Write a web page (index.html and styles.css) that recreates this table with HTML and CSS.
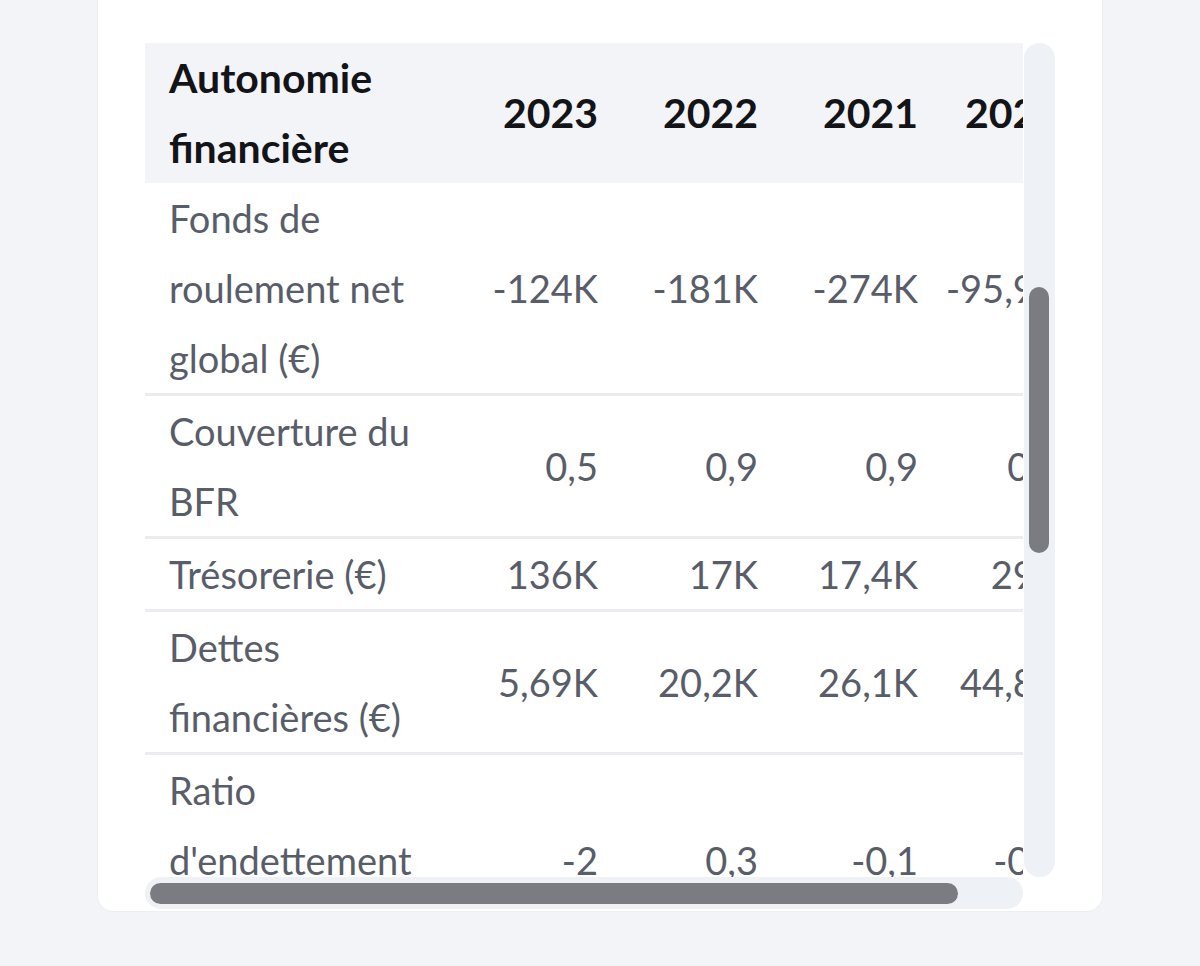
FILE: index.html
```html
<!DOCTYPE html>
<html lang="fr">
<head>
<meta charset="utf-8">
<title>Autonomie financière</title>
<link rel="stylesheet" href="styles.css">
</head>
<body>
<div class="card">
  <div class="scroller">
    <div class="viewport">
      <table class="fin-table">
        <colgroup>
          <col class="c-label"><col class="c-year"><col class="c-year"><col class="c-year"><col class="c-last">
        </colgroup>
        <thead>
          <tr>
            <th class="label">Autonomie financière</th>
            <th>2023</th>
            <th>2022</th>
            <th>2021</th>
            <th>2020</th>
          </tr>
        </thead>
        <tbody>
          <tr>
            <td class="label">Fonds de roulement net global (€)</td>
            <td>-124K</td><td>-181K</td><td>-274K</td><td>-95,9K</td>
          </tr>
          <tr>
            <td class="label">Couverture du BFR</td>
            <td>0,5</td><td>0,9</td><td>0,9</td><td>0,8</td>
          </tr>
          <tr>
            <td class="label">Trésorerie (€)</td>
            <td>136K</td><td>17K</td><td>17,4K</td><td>29K</td>
          </tr>
          <tr>
            <td class="label">Dettes financières (€)</td>
            <td>5,69K</td><td>20,2K</td><td>26,1K</td><td>44,8K</td>
          </tr>
          <tr>
            <td class="label">Ratio d'endettement (%)</td>
            <td>-2</td><td>0,3</td><td>-0,1</td><td>-0,2</td>
          </tr>
          <tr>
            <td class="label">Autonomie financière (%)</td>
            <td>-5</td><td>12</td><td>8</td><td>15</td>
          </tr>
        </tbody>
      </table>
    </div>
    <div class="vtrack"><div class="vthumb"></div></div>
    <div class="htrack"><div class="hthumb"></div></div>
    <div class="corner"></div>
  </div>
</div>
</body>
</html>
```

FILE: styles.css
```css
* { box-sizing: border-box; }

html, body {
  margin: 0;
  padding: 0;
  background: #f3f4f8;
  font-family: "Lato", "Noto Sans", sans-serif;
  overflow: hidden;
}

.card {
  width: 1006px;
  margin: -5px auto 0;
  padding: 48px 48px 2px;
  background: #ffffff;
  border: 1px solid #eceef2;
  border-top: none;
  border-radius: 0 0 16px 16px;
}

.scroller {
  display: grid;
  grid-template-columns: 878px 32px;
  grid-template-rows: 834px 32px;
  margin-left: -1px;
}

.viewport {
  overflow: hidden;
}

.fin-table {
  table-layout: fixed;
  width: 939px;
  border-collapse: separate;
  border-spacing: 0;
}

.c-label { width: 317px; }
.c-year { width: 160px; }
.c-last { width: 142px; }

.fin-table th,
.fin-table td {
  padding: 0 24px;
  line-height: 70px;
  vertical-align: middle;
  text-align: right;
  white-space: nowrap;
}

.fin-table th:last-child,
.fin-table td:last-child {
  padding-left: 0;
}

.fin-table th {
  background: #f3f4f8;
  color: #131418;
  font-size: 41px;
  font-weight: 700;
}

.fin-table td {
  color: #585d69;
  font-size: 38px;
  font-weight: 400;
  border-bottom: 3px solid #ebecef;
}

.fin-table .label {
  text-align: left;
  white-space: normal;
}

.vtrack {
  margin-left: 1px;
  background: #eef1f6;
  border-radius: 16px;
  padding: 244px 6px 0 5px;
}

.vthumb {
  height: 266px;
  background: #7b7c81;
  border-radius: 10px;
}

.htrack {
  background: #eef1f6;
  border-radius: 16px;
  padding: 6px 5px 0;
}

.hthumb {
  width: 808px;
  height: 21px;
  background: #7b7c81;
  border-radius: 11px;
}

.corner {
  background: #ffffff;
}
```
